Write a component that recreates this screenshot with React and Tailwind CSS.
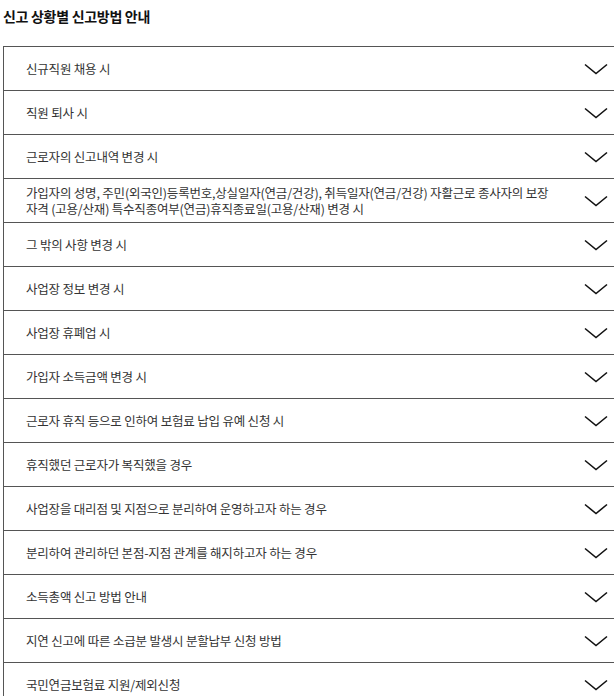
const items = [
  '신규직원 채용 시',
  '직원 퇴사 시',
  '근로자의 신고내역 변경 시',
  '가입자의 성명, 주민(외국인)등록번호,상실일자(연금/건강),  취득일자(연금/건강) 자활근로 종사자의 보장 자격 (고용/산재) 특수직종여부(연금)휴직종료일(고용/산재) 변경 시',
  '그 밖의 사항 변경 시',
  '사업장 정보 변경 시',
  '사업장 휴폐업 시',
  '가입자 소득금액 변경 시',
  '근로자 휴직 등으로 인하여 보험료 납입 유예 신청 시',
  '휴직했던 근로자가 복직했을 경우',
  '사업장을 대리점 및 지점으로 분리하여 운영하고자 하는 경우',
  '분리하여 관리하던 본점-지점 관계를 해지하고자 하는 경우',
  '소득총액 신고 방법 안내',
  '지연 신고에 따른 소급분 발생시 분할납부 신청 방법',
  '국민연금보험료 지원/제외신청',
];

function Chevron() {
  return (
    <svg width="24" height="12" viewBox="0 0 24 12" className="shrink-0">
      <path d="M1 1.5 L12 10.5 L23 1.5" fill="none" stroke="#111" strokeWidth="1.6" />
    </svg>
  );
}

export default function App() {
  return (
    <div
      className="w-[614px] h-[696px] overflow-hidden bg-white"
      style={{ fontFamily: '"Noto Sans CJK KR", "Noto Sans", sans-serif' }}
    >
      <h2 className="pl-[3px] pt-[6px] h-[46px] text-[14px] font-bold text-[#111] tracking-[-0.3px]">
        신고 상황별 신고방법 안내
      </h2>
      <ul className="ml-[3px] w-[640px] border-t border-l border-[#555]">
        {items.map((item, index) => (
          <li
            key={index}
            className="h-[44px] border-b border-[#555] flex items-center justify-between pl-[22px] pr-[35px]"
          >
            <span className="text-[12.5px] leading-[16px] text-[#333] tracking-[-0.2px] max-w-[540px] break-keep">
              {item}
            </span>
            <Chevron />
          </li>
        ))}
      </ul>
    </div>
  );
}
